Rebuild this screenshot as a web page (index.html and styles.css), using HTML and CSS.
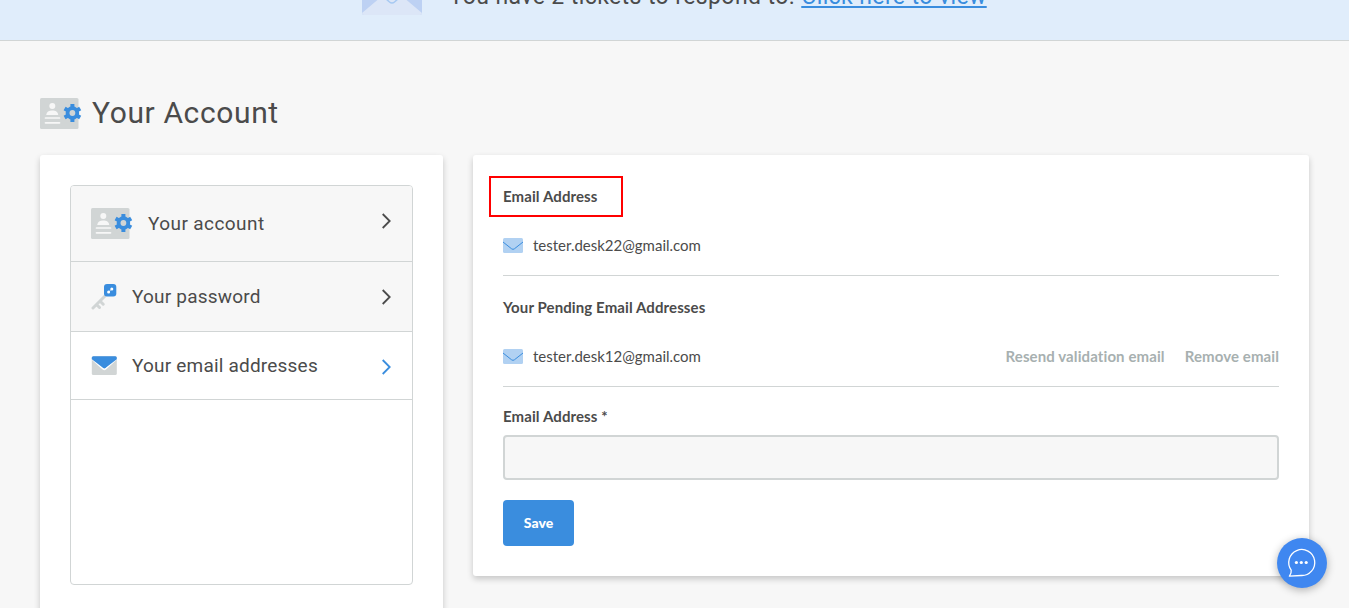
FILE: index.html
```html
<!DOCTYPE html>
<html lang="en">
<head>
<meta charset="utf-8">
<title>Your Account</title>
<link rel="stylesheet" href="styles.css">
</head>
<body>
<svg width="0" height="0" class="sprite">
  <symbol id="account" viewBox="0 0 42 32">
    <rect width="38.5" height="31" rx="1.5" fill="#d1d5d5"/>
    <circle cx="12.3" cy="8" r="3" fill="#f7f7f7"/>
    <path d="M6.2 17c.3-3 2.600-4.400 6-4.400s5.800 1.400 6 4.400z" fill="#f7f7f7"/>
    <path d="M5.500 20h14M5.500 24.800h14" stroke="#f7f7f7" stroke-width="1.700" stroke-linecap="round"/>
    <g transform="translate(32.400 15)">
      <g stroke="#3a8dde" stroke-width="4">
        <path d="M0-9V9"/><path d="M0-9V9" transform="rotate(60)"/><path d="M0-9V9" transform="rotate(120)"/>
      </g>
      <circle r="6.800" fill="#3a8dde"/><circle r="2.900" fill="#d1d5d5"/>
    </g>
  </symbol>
  <symbol id="mail" viewBox="0 0 20 15">
    <rect width="20" height="15" rx="1.500" fill="#b1d1f2"/>
    <path d="M0 4l8.600 6.800q1.400 1.100 2.800 0L20 4" fill="none" stroke="#3a8dde"/>
  </symbol>
</svg>

<header class="banner">
  <svg class="banner-icon" width="60" height="44" viewBox="0 0 60 44">
    <rect width="60" height="44" rx="2" fill="#bdd1f3"/>
    <path d="M0 42l22.500-19 5 4q2.500 2 5 0l5-4L60 42q0 2-2 2H2q-2 0-2-2z" fill="#dce6f7"/>
    <path d="M23 27l4.500 4q2.500 2 5 0l4.500-4" fill="none" stroke="#a6c9f2" stroke-width="1.500"/>
  </svg>
  <p class="banner-text"><span class="banner-message">You have 2 tickets to respond to.</span> <a class="banner-link" href="#">Click here to view</a></p>
</header>

<main class="page">
  <h1 class="title">
    <svg width="42" height="32"><use href="#account"/></svg>
    <span class="title-text">Your Account</span>
  </h1>
  <div class="columns">
    <aside class="panel sidebar">
      <nav class="menu">
        <a class="item item-account" href="#">
          <svg width="42" height="32"><use href="#account"/></svg>
          <span class="label label-account">Your account</span>
          <svg class="chevron" width="10" height="16" viewBox="0 0 10 16"><path d="M1.700 1L8.700 8l-7 7"/></svg>
        </a>
        <a class="item item-password" href="#">
          <svg width="26" height="26" viewBox="0 0 26 26">
            <path d="M14 12L2 24M5.500 20.500l3 3M9 17l3.200 3.200" stroke="#d1d5d5" stroke-width="3" fill="none" stroke-linecap="round"/>
            <rect x="13" y="0" width="12.300" height="12.500" rx="3" fill="#3a8dde"/>
            <path d="M17.700 8l3-3" stroke="#b1d1f2"/><circle cx="17.600" cy="8" r="1.500" fill="#fff"/><circle cx="20.800" cy="4.900" r="1.500" fill="#fff"/>
          </svg>
          <span class="label label-password">Your password</span>
          <svg class="chevron" width="10" height="16" viewBox="0 0 10 16"><path d="M1.700 1L8.700 8l-7 7"/></svg>
        </a>
        <a class="item item-email" href="#">
          <svg width="26" height="20" viewBox="0 0 26 20">
            <rect x=".8" y=".3" width="25" height="18.700" rx="1.500" fill="#d1d5d5"/>
            <path d="M.8 2.500L12.200 12.800q1.100.9 2.200 0L25.800 2.500" fill="#3a8dde" stroke="#fff" stroke-width="1.800"/>
            <path d="M.8 3.300V1.800Q.8.300 2.300.300h22q1.500 0 1.500 1.500V3.300L14.300 12q-1 .7-2 0z" fill="#3a8dde"/>
          </svg>
          <span class="label label-email">Your email addresses</span>
          <svg class="chevron chevron-active" width="10" height="16" viewBox="0 0 10 16"><path d="M1.700 1L8.700 8l-7 7"/></svg>
        </a>
      </nav>
    </aside>

    <section class="panel content">
      <h2 class="heading heading-marked">Email Address</h2>
      <div class="row">
        <svg width="20" height="15"><use href="#mail"/></svg>
        <span class="address">tester.desk22@gmail.com</span>
      </div>
      <h2 class="heading heading-pending">Your Pending Email Addresses</h2>
      <div class="row">
        <svg width="20" height="15"><use href="#mail"/></svg>
        <span class="address">tester.desk12@gmail.com</span>
        <a class="action action-resend" href="#">Resend validation email</a>
        <a class="action" href="#">Remove email</a>
      </div>
      <form class="form">
        <label class="heading field-label" for="email">Email Address <span class="required">*</span></label>
        <input class="field" id="email" type="email">
        <button class="save" type="button">Save</button>
      </form>
    </section>
  </div>
</main>

<button class="chat" aria-label="Chat">
  <svg width="50" height="50" viewBox="0 0 50 50">
    <path d="M14.200 32.100A13 13 0 1 1 24.100 37.500L12.400 38.200Q14.600 35.500 14.200 32.100z" fill="none" stroke="#fff" stroke-width="1.300" stroke-linejoin="round"/>
    <circle cx="19.400" cy="24.500" r="1.600" fill="#fff"/><circle cx="24.300" cy="24.500" r="1.600" fill="#fff"/><circle cx="29.200" cy="24.500" r="1.600" fill="#fff"/>
  </svg>
</button>
</body>
</html>
```

FILE: styles.css
```css
* { box-sizing: border-box; }
html, body { height: 100%; }
body {
  margin: 0;
  overflow: hidden;
  background: #f7f7f7;
  color: #4b4b4b;
  font-family: Lato, sans-serif;
  font-size: 15px;
}
a { color: inherit; text-decoration: none; }
svg { display: block; flex: none; }
.sprite { position: absolute; }

.banner {
  display: flex;
  justify-content: center;
  align-items: flex-end;
  gap: 27px;
  height: 41px;
  padding-bottom: 25px;
  overflow: hidden;
  background: #e0edfb;
  border-bottom: 1px solid #d1d5d5;
}
.banner-text {
  margin: 0 0 3px;
  line-height: 30px;
  font-family: Roboto, sans-serif;
  font-size: 23px;
  letter-spacing: 0.4px;
  white-space: nowrap;
}
.banner-link {
  color: #3a8dde;
  text-decoration: underline;
  text-decoration-thickness: 2px;
  text-underline-offset: 2px;
  text-decoration-skip-ink: none;
}

.page { padding: 53px 40px 0; }
.title {
  display: flex;
  align-items: center;
  gap: 10px;
  height: 40px;
  margin: 0;
  font: 400 30px/38px Roboto, sans-serif;
  letter-spacing: 0.62px;
}
.title-text { padding-bottom: 2px; }
.columns {
  display: grid;
  grid-template-columns: 403px 836px;
  gap: 30px;
  align-items: start;
  padding-top: 21px;
}
.panel {
  background: #fff;
  border-radius: 3px;
  box-shadow: 0 3px 6px rgba(0, 0, 0, 0.2);
}
.sidebar { height: 480px; padding: 30px; }
.menu {
  height: 400px;
  border: 1px solid #d1d5d5;
  border-radius: 4px;
  overflow: hidden;
}
.item {
  display: flex;
  align-items: center;
  gap: 15px;
  padding: 0 21px 0 20px;
  background: #f7f7f7;
  border-bottom: 1px solid #d1d5d5;
  font-family: Roboto, sans-serif;
  font-size: 19px;
}
.item-account { height: 76px; }
.item-account .chevron { margin-bottom: 5px; }
.item-password { height: 70px; }
.item-email { height: 68px; background: #fff; }
.item-email .chevron { margin-top: 2px; }
.label { letter-spacing: 0.2px; }
.label-account { letter-spacing: 0.42px; }
.chevron {
  margin-left: auto;
  fill: none;
  stroke: #4b4b4b;
  stroke-width: 1.8;
}
.chevron-active { stroke: #3a8dde; }

.content { height: 421px; padding: 21px 30px 30px; }
.heading {
  margin: 0;
  font-size: 15px;
  font-weight: 700;
  line-height: 20px;
  letter-spacing: 0.1px;
}
.heading-marked {
  width: 134px;
  height: 41px;
  margin-left: -14px;
  padding: 8px 12px;
  border: 2px solid #ff0000;
}
.heading-pending { margin: 21px 0 11px; }
.row {
  display: flex;
  align-items: center;
  gap: 10px;
  height: 59px;
  padding-bottom: 2px;
  border-bottom: 1px solid #d1d5d5;
}
.action {
  color: #a7b0b0;
  font-weight: 700;
  letter-spacing: 0.1px;
}
.action-resend { margin: 0 10px 0 auto; }
.form { padding-top: 19px; }
.field-label { display: block; }
.field {
  display: block;
  width: 100%;
  height: 45px;
  margin: 9px 0 20px;
  background: #f7f7f7;
  border: 2px solid #d1d5d5;
  border-radius: 4px;
}
.save {
  width: 71px;
  height: 46px;
  padding: 0 0 1px;
  background: #3a8dde;
  border: 0;
  border-radius: 4px;
  color: #fff;
  font: 900 14px Lato, sans-serif;
}
.chat {
  position: fixed;
  left: 1277px;
  top: 538px;
  width: 50px;
  height: 50px;
  padding: 0;
  border: 0;
  border-radius: 50%;
  background: #3f87f0;
  box-shadow: 0 2px 8px rgba(0, 0, 0, 0.3);
}
```
